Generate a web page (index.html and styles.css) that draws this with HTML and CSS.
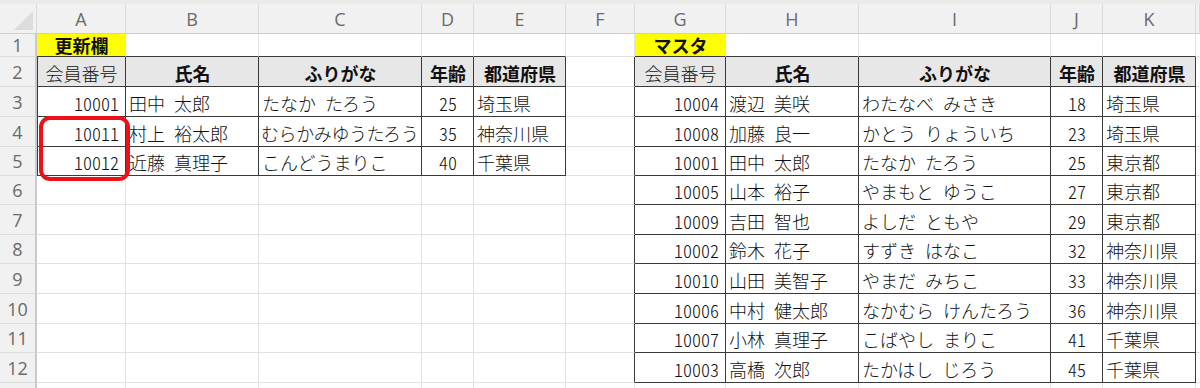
FILE: index.html
```html
<!DOCTYPE html>
<html lang="ja">
<head>
<meta charset="utf-8">
<title>Sheet</title>
<link rel="stylesheet" href="styles.css">
</head>
<body>
<div class="sheet">
  <div class="band"></div>
  <div class="row colhead">
    <div class="cell corner"><span class="tri"></span></div>
    <div class="cell">A</div><div class="cell">B</div><div class="cell">C</div><div class="cell">D</div><div class="cell">E</div><div class="cell">F</div><div class="cell">G</div><div class="cell">H</div><div class="cell">I</div><div class="cell">J</div><div class="cell">K</div><div class="cell"></div>
  </div>
  <div class="row h23">
    <div class="cell rh">1</div>
    <div class="cell ctr yel tt b">更新欄</div><div class="cell tt"></div><div class="cell tt"></div><div class="cell tt"></div><div class="cell tt"></div><div class="cell"></div>
    <div class="cell ctr yel tt b">マスタ</div><div class="cell tt"></div><div class="cell tt"></div><div class="cell tt"></div><div class="cell tt"></div><div class="cell"></div>
  </div>
  <div class="row h30">
    <div class="cell rh">2</div>
    <div class="cell t hd ctr first">会員番号</div><div class="cell t hd ctr b">氏名</div><div class="cell t hd ctr b">ふりがな</div><div class="cell t hd ctr b">年齢</div><div class="cell t hd ctr b">都道府県</div><div class="cell tl"></div>
    <div class="cell t hd ctr">会員番号</div><div class="cell t hd ctr b">氏名</div><div class="cell t hd ctr b">ふりがな</div><div class="cell t hd ctr b">年齢</div><div class="cell t hd ctr b">都道府県</div><div class="cell"></div>
  </div>
  <div class="row h30">
    <div class="cell rh">3</div>
    <div class="cell t num first">10001</div><div class="cell t">田中 太郎</div><div class="cell t">たなか たろう</div><div class="cell t ctr">25</div><div class="cell t">埼玉県</div><div class="cell tl"></div>
    <div class="cell t num">10004</div><div class="cell t">渡辺 美咲</div><div class="cell t">わたなべ みさき</div><div class="cell t ctr">18</div><div class="cell t">埼玉県</div><div class="cell"></div>
  </div>
  <div class="row h30">
    <div class="cell rh">4</div>
    <div class="cell t num first">10011</div><div class="cell t">村上 裕太郎</div><div class="cell t tight">むらかみゆうたろう</div><div class="cell t ctr">35</div><div class="cell t">神奈川県</div><div class="cell tl"></div>
    <div class="cell t num">10008</div><div class="cell t">加藤 良一</div><div class="cell t">かとう りょういち</div><div class="cell t ctr">23</div><div class="cell t">埼玉県</div><div class="cell"></div>
  </div>
  <div class="row h29">
    <div class="cell rh">5</div>
    <div class="cell t num first">10012</div><div class="cell t">近藤 真理子</div><div class="cell t">こんどうまりこ</div><div class="cell t ctr">40</div><div class="cell t">千葉県</div><div class="cell tl"></div>
    <div class="cell t num">10001</div><div class="cell t">田中 太郎</div><div class="cell t">たなか たろう</div><div class="cell t ctr">25</div><div class="cell t">東京都</div><div class="cell"></div>
  </div>
  <div class="row h29">
    <div class="cell rh">6</div>
    <div class="cell"></div><div class="cell"></div><div class="cell"></div><div class="cell"></div><div class="cell"></div><div class="cell tl"></div>
    <div class="cell t num">10005</div><div class="cell t">山本 裕子</div><div class="cell t">やまもと ゆうこ</div><div class="cell t ctr">27</div><div class="cell t">東京都</div><div class="cell"></div>
  </div>
  <div class="row h30">
    <div class="cell rh">7</div>
    <div class="cell"></div><div class="cell"></div><div class="cell"></div><div class="cell"></div><div class="cell"></div><div class="cell tl"></div>
    <div class="cell t num">10009</div><div class="cell t">吉田 智也</div><div class="cell t">よしだ ともや</div><div class="cell t ctr">29</div><div class="cell t">東京都</div><div class="cell"></div>
  </div>
  <div class="row h29">
    <div class="cell rh">8</div>
    <div class="cell"></div><div class="cell"></div><div class="cell"></div><div class="cell"></div><div class="cell"></div><div class="cell tl"></div>
    <div class="cell t num">10002</div><div class="cell t">鈴木 花子</div><div class="cell t">すずき はなこ</div><div class="cell t ctr">32</div><div class="cell t">神奈川県</div><div class="cell"></div>
  </div>
  <div class="row h30">
    <div class="cell rh">9</div>
    <div class="cell"></div><div class="cell"></div><div class="cell"></div><div class="cell"></div><div class="cell"></div><div class="cell tl"></div>
    <div class="cell t num">10010</div><div class="cell t">山田 美智子</div><div class="cell t">やまだ みちこ</div><div class="cell t ctr">33</div><div class="cell t">神奈川県</div><div class="cell"></div>
  </div>
  <div class="row h30">
    <div class="cell rh">10</div>
    <div class="cell"></div><div class="cell"></div><div class="cell"></div><div class="cell"></div><div class="cell"></div><div class="cell tl"></div>
    <div class="cell t num">10006</div><div class="cell t">中村 健太郎</div><div class="cell t">なかむら けんたろう</div><div class="cell t ctr">36</div><div class="cell t">神奈川県</div><div class="cell"></div>
  </div>
  <div class="row h29">
    <div class="cell rh">11</div>
    <div class="cell"></div><div class="cell"></div><div class="cell"></div><div class="cell"></div><div class="cell"></div><div class="cell tl"></div>
    <div class="cell t num">10007</div><div class="cell t">小林 真理子</div><div class="cell t">こばやし まりこ</div><div class="cell t ctr">41</div><div class="cell t">千葉県</div><div class="cell"></div>
  </div>
  <div class="row h30">
    <div class="cell rh">12</div>
    <div class="cell"></div><div class="cell"></div><div class="cell"></div><div class="cell"></div><div class="cell"></div><div class="cell tl"></div>
    <div class="cell t num">10003</div><div class="cell t">高橋 次郎</div><div class="cell t">たかはし じろう</div><div class="cell t ctr">45</div><div class="cell t">千葉県</div><div class="cell"></div>
  </div>
  <div class="row h30">
    <div class="cell rh"></div>
    <div class="cell"></div><div class="cell"></div><div class="cell"></div><div class="cell"></div><div class="cell"></div><div class="cell"></div>
    <div class="cell"></div><div class="cell"></div><div class="cell"></div><div class="cell"></div><div class="cell"></div><div class="cell"></div>
  </div>
  <div class="mark"></div>
</div>
</body>
</html>
```
FILE: styles.css
```css
html, body {
  margin: 0;
  padding: 0;
  background: #ffffff;
  overflow: hidden;
}

.sheet {
  position: relative;
  width: 1200px;
  height: 388px;
  overflow: hidden;
}

.band {
  height: 4px;
  background: #e8ebe6;
}

.row {
  display: grid;
  grid-template-columns: 37px 89px 133px 163px 52px 92px 69px 91px 133px 192px 52px 93px 1fr;
}

.colhead { height: 30px; }
.h23 { height: 23px; }
.h29 { height: 29px; }
.h30 { height: 30px; }

.cell {
  box-sizing: border-box;
  display: flex;
  align-items: center;
  padding: 2px 2px 0 3px;
  border-right: 1px solid #e1e1e1;
  border-bottom: 1px solid #e1e1e1;
  font-family: "Noto Sans CJK JP", sans-serif;
  font-size: 18px;
  line-height: 22px;
  font-weight: 300;
  font-feature-settings: "hwid";
  color: #111;
  white-space: nowrap;
  overflow: hidden;
}

.h23 .cell {
  padding-top: 0;
  line-height: 21px;
  overflow: visible;
}

.tight { letter-spacing: -0.4px; padding-left: 2px; }

.colhead .cell {
  background: #f1f1f1;
  justify-content: center;
  border-right-color: #dadada;
  border-bottom-color: #cdcdcd;
  font-family: "Open Sans", "Noto Sans", sans-serif;
  font-feature-settings: normal;
  font-weight: 400;
  font-size: 18px;
  color: #6a6a6a;
  padding: 0;
}

.corner {
  position: relative;
}

.tri {
  position: absolute;
  right: 3px;
  bottom: 3px;
  width: 19px;
  height: 19px;
  background: #dcdcdc;
  clip-path: polygon(100% 0, 100% 100%, 0 100%);
}

.rh {
  background: #f1f1f1;
  justify-content: center;
  border-right: 2px solid #cacaca;
  border-bottom-color: #dcdcdc;
  font-family: "Open Sans", "Noto Sans", sans-serif;
  font-feature-settings: normal;
  font-weight: 400;
  font-size: 18px;
  color: #6a6a6a;
  padding: 0;
}

.t {
  border-right-color: #3a3a3a;
  border-bottom-color: #3a3a3a;
}

.tl { border-right-color: #3a3a3a; }
.tt { border-bottom-color: #3a3a3a; }

.first { box-shadow: inset 1px 0 0 #3a3a3a; }

.hd { background: #e7e7e7; }

.yel { background: #ffff00; }

.b { font-weight: 700; }

.ctr { justify-content: center; }

.num {
  justify-content: flex-end;
  padding-right: 6px;
}

.mark {
  position: absolute;
  left: 39px;
  top: 116px;
  width: 91px;
  height: 65px;
  box-sizing: border-box;
  border: 4px solid #ee1016;
  border-radius: 11px;
}
```
